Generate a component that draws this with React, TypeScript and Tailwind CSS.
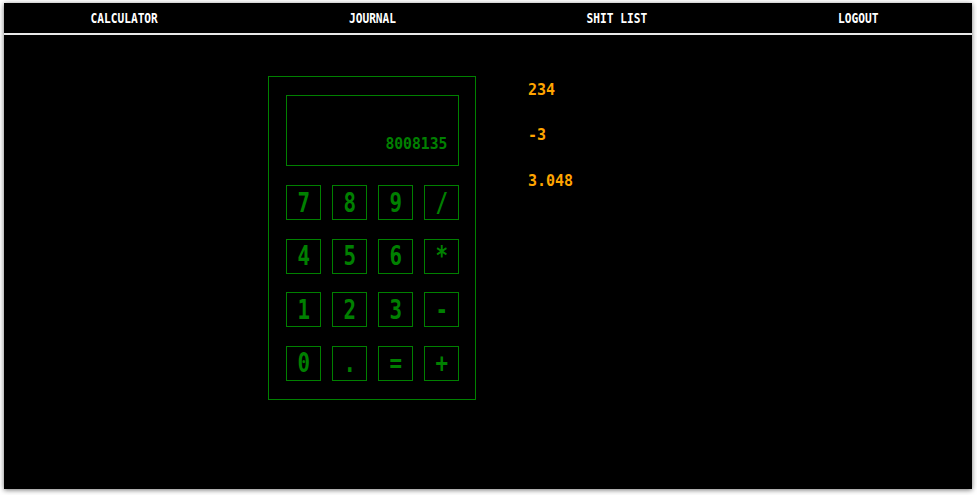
import React from "react";

const mono = { fontFamily: '"DejaVu Sans Mono", "Liberation Mono", monospace' };

const keys = ["7", "8", "9", "/", "4", "5", "6", "*", "1", "2", "3", "-", "0", ".", "=", "+"];

const nav: { label: string; w: string }[] = [
  { label: "CALCULATOR", w: "w-[65px]" },
  { label: "JOURNAL", w: "w-[46px]" },
  { label: "SHIT LIST", w: "w-[60px]" },
  { label: "LOGOUT", w: "w-[39px]" },
];

export default function App() {
  return (
    <div className="w-[977px] h-[495px] bg-white overflow-hidden pt-[3px] pl-[4px]" style={mono}>
      <div className="w-[968px] h-[486px] bg-black shadow-[0_1px_5px_rgba(0,0,0,0.55)]">
        <nav className="h-[32px] border-b-2 border-[#e8e8e8] flex items-center justify-between pl-[88px] pr-[94px]">
          {nav.map((n) => (
            <div key={n.label} className={`${n.w} flex justify-center`}>
              <span className="inline-block whitespace-nowrap scale-x-[0.8] text-[14px] font-bold text-white leading-none">
                {n.label}
              </span>
            </div>
          ))}
        </nav>
        <div className="flex items-start pl-[264px]">
          <div className="mt-[41px] w-[208px] h-[324px] border border-[#008000] pt-[18px] pl-[17px]">
            <div className="w-[173px] h-[71px] border border-[#008000] flex items-end justify-end pr-[11px] pb-[13px]">
              <span className="inline-block origin-right scale-x-[0.92] text-[16px] font-bold leading-none text-[#008000]">
                8008135
              </span>
            </div>
            <div className="mt-[19px] grid grid-cols-[repeat(4,35px)] auto-rows-[35px] gap-x-[11px] gap-y-[18.67px]">
              {keys.map((k) => (
                <button
                  key={k}
                  className="border border-[#008000] flex items-center justify-center text-[#008000]"
                >
                  <span className="inline-block scale-x-[0.8] text-[26px] font-bold leading-none">{k}</span>
                </button>
              ))}
            </div>
          </div>
          <div className="ml-[52px] mt-[32.5px] text-[15px] font-bold leading-[45.5px] text-[#ffa500]">
            <div>234</div>
            <div>-3</div>
            <div>3.048</div>
          </div>
        </div>
      </div>
    </div>
  );
}
